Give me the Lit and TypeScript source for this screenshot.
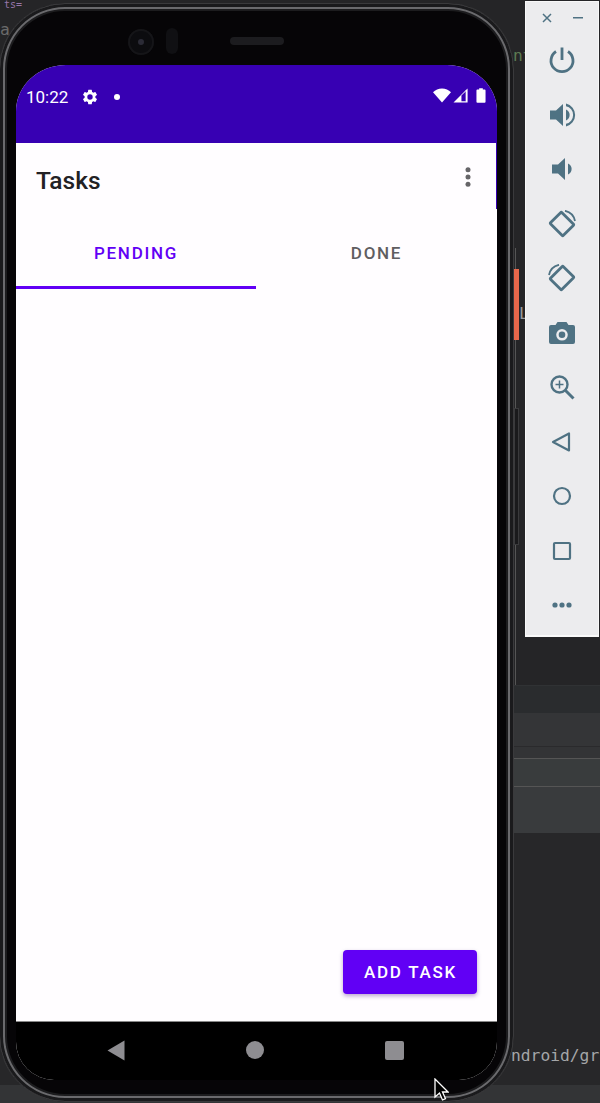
import { LitElement, html, css } from "lit";
import { customElement } from "lit/decorators.js";

@customElement("app-root")
export class AppRoot extends LitElement {
  static styles = css`
    :host { display: block; width: 600px; height: 1103px; position: relative; overflow: hidden; background: #272729; font-family: Roboto, "Liberation Sans", sans-serif; }
    .ide { position: absolute; inset: 0; display: flex; flex-direction: column; }
    .band { flex: none; }
    .b0 { height: 685px; background: #252527; }
    .b1 { height: 28px; background: #2a2c2e; border-top: 1px solid #303234; box-sizing: border-box; }
    .b2 { height: 34px; background: #343537; border-bottom: 1px solid #2a2a2c; box-sizing: border-box; }
    .b3 { height: 11px; background: #333436; }
    .b4 { height: 29px; background: #393c3d; border-top: 1px solid #555; border-bottom: 1px solid #555; box-sizing: border-box; }
    .b5 { height: 46px; background: #393b3d; }
    .b6 { height: 252px; background: #272729; }
    .b7 { flex: 1; background: #333436; }
    .code { position: absolute; font-family: "DejaVu Sans Mono", monospace; font-size: 16.300px; line-height: 20px; white-space: pre; }
    .c1 { left: 511px; top: 1046px; color: #a4a6a8; }
    .c2 { left: 4px; top: 0; line-height: 10px; font-size: 10px; color: #9876aa; }
    .c3 { left: 513px; top: 46px; color: #5c7a52; }
    .c4 { left: 519px; top: 304px; color: #9a9a9a; }
    .c5 { left: 0; top: 20px; color: #6a6a6a; }
    .orange { position: absolute; left: 514px; top: 269px; width: 5px; height: 71px; background: #e8674a; }
    .tick { position: absolute; left: 515px; width: 1px; background: #555; }
    .t1 { top: 248px; height: 22px; }
    .t2 { top: 340px; height: 68px; }
    .t3 { top: 545px; height: 140px; }
    .bracket { position: absolute; left: 514px; top: 408px; width: 5px; height: 137px; box-sizing: border-box; background: #1a1a1c; border: 1px solid #3a3a3c; }
    .device { position: absolute; left: -1px; top: 3px; width: 515px; height: 1099px; box-sizing: border-box; border-radius: 66px; background: #060507; border: 1px solid #3a3a3c; box-shadow: inset 0 0 0 3px #1a1a1c, inset 0 0 0 5px #6a6a6d, inset 0 0 0 7px #1c1c1e; }
    .bezel-top { position: absolute; left: 0; right: 0; top: 0; height: 61px; }
    .camera { position: absolute; left: 128px; top: 25px; width: 26px; height: 26px; border-radius: 50%; background: #0c0c0f; box-shadow: inset 0 0 0 2px #151518; display: flex; align-items: center; justify-content: center; }
    .camera i { width: 6px; height: 6px; border-radius: 50%; background: #2b2b36; }
    .sensor { position: absolute; left: 166px; top: 24px; width: 12px; height: 26px; border-radius: 6px; background: #101013; }
    .speaker { position: absolute; left: 230px; top: 33px; width: 54px; height: 8px; border-radius: 4px; background: #1c1c1f; }
    .screen { position: absolute; left: 16px; top: 61px; width: 481px; height: 1015px; display: flex; flex-direction: column; background: #fffdff; overflow: hidden; border-radius: 50px 50px 38px 38px / 46px 46px 38px 38px; }
    .status { height: 78px; flex: none; background: #3700b3; color: #fff; display: flex; align-items: flex-start; padding: 22px 11px 0 10px; box-sizing: border-box; }
    .time { font-size: 17px; line-height: 20px; }
    .gear { margin-left: 13px; margin-top: 1px; display: block; }
    .dot { width: 6px; height: 6px; border-radius: 50%; background: #fff; margin: 7px 0 0 15px; }
    .sicons { margin-left: auto; display: flex; align-items: center; margin-top: 1px; }
    .sicons svg { display: block; }
    .s-sig { margin: 0 8px 0 2px; }
    .appbar { height: 66px; flex: none; display: flex; align-items: center; justify-content: space-between; padding: 0 26px 0 20px; background: #fffdff; box-shadow: inset -1px 0 0 #3700b3; box-sizing: border-box; }
    .title { font-size: 24.500px; font-weight: 500; color: #222124; line-height: 28px; margin-top: 10px; }
    .more { display: block; margin-top: 2px; }
    .tabs { height: 80px; flex: none; display: flex; }
    .tab { flex: 1 1 0; display: flex; align-items: center; justify-content: center; box-sizing: border-box; padding-top: 11px; font-size: 17px; font-weight: 500; letter-spacing: 1.700px; color: #5f5e61; border-bottom: 3px solid transparent; }
    .tab.on { flex: 0 0 240px; color: #6100f5; border-bottom-color: #6100f5; }
    .content { flex: 1; display: flex; align-items: flex-end; justify-content: flex-end; padding: 0 20.500px 27px 0; }
    .btn { width: 134px; height: 44px; border-radius: 4px; background: #6100f5; color: #fff; font-size: 17px; font-weight: 500; letter-spacing: 1.700px; padding-left: 2px; box-sizing: border-box; display: flex; align-items: center; justify-content: center; box-shadow: 0 2px 4px rgba(60,0,120,.35); }
    .nav { height: 59px; flex: none; background: #000; border-top: 1px solid #888; box-sizing: border-box; display: flex; align-items: center; padding: 0 93px 2px 91px; justify-content: space-between; }
    .nav svg { display: block; }
    .panel { position: absolute; left: 525px; top: 1px; width: 74px; height: 636px; box-sizing: border-box; background: #ececee; border: 1px solid #f8f8f8; border-bottom: 2px solid #fafafa; display: flex; flex-direction: column; align-items: center; }
    .winbtns { height: 31px; width: 100%; flex: none; display: flex; justify-content: space-between; align-items: center; padding: 0 15px; box-sizing: border-box; }
    .winbtns svg { display: block; }
    .tool { height: 54.500px; flex: none; display: flex; align-items: center; justify-content: center; }
    .tool svg { display: block; width: 28px; height: 28px; }
    .cursor { position: absolute; left: 433px; top: 1078px; display: block; }
  `;

  render() {
    const c = "#4f7283";
    return html`
      <div class="ide">
        <div class="band b0"></div><div class="band b1"></div><div class="band b2"></div><div class="band b3"></div>
        <div class="band b4"></div><div class="band b5"></div><div class="band b6"></div><div class="band b7"></div>
      </div>
      <span class="code c2">ts=</span>
      <span class="code c5">a</span>
      <span class="code c3">nt</span>
      <span class="code c4">L</span>
      <span class="code c1">ndroid/gr</span>
      <div class="tick t1"></div>
      <div class="tick t2"></div>
      <div class="tick t3"></div>
      <div class="bracket"></div>
      <div class="orange"></div>

      <div class="device">
        <div class="bezel-top">
          <div class="camera"><i></i></div>
          <div class="sensor"></div>
          <div class="speaker"></div>
        </div>
        <div class="screen">
          <div class="status">
            <span class="time">10:22</span>
            <svg class="gear" width="18" height="18" viewBox="0 0 24 24" fill="#fff"><path d="M19.14 12.94c.04-.3.06-.61.06-.94s-.02-.64-.07-.94l2.03-1.58a.49.49 0 0 0 .12-.61l-1.92-3.32a.49.49 0 0 0-.59-.22l-2.39.96c-.5-.38-1.03-.7-1.62-.94l-.36-2.54a.48.48 0 0 0-.48-.41h-3.84a.47.47 0 0 0-.47.41l-.36 2.54c-.59.24-1.13.57-1.62.94l-2.39-.96a.48.48 0 0 0-.59.22L2.74 8.87a.47.47 0 0 0 .12.61l2.03 1.58c-.05.3-.09.63-.09.94s.02.64.07.94l-2.03 1.58a.49.49 0 0 0-.12.61l1.92 3.32c.12.22.37.29.59.22l2.39-.96c.5.38 1.03.7 1.62.94l.36 2.54c.05.24.24.41.48.41h3.84c.24 0 .44-.17.47-.41l.36-2.54c.59-.24 1.13-.56 1.62-.94l2.39.96c.22.08.47 0 .59-.22l1.92-3.32a.46.46 0 0 0-.12-.61l-2.01-1.58zM12 15.6A3.6 3.6 0 1 1 12 8.4a3.6 3.6 0 0 1 0 7.2z"/></svg>
            <span class="dot"></span>
            <div class="sicons">
              <svg width="18" height="15" viewBox="0 0 18 15" fill="#fff"><path d="M9 14.5 0 4.2C2.3 1.9 5.5.5 9 .5s6.700 1.400 9 3.700z"/></svg>
              <svg class="s-sig" width="15" height="15" viewBox="0 0 16 16"><path d="M.5 15.500 15.500.5v15z" fill="#fff"/><path d="M9 14V8.100L14 3.200V14z" fill="#3700b3"/><path d="M13.500 2.500h1.500v12h-1.500z" fill="#fff"/></svg>
              <svg width="10" height="15" viewBox="0 0 11 16" fill="#fff"><path d="M3.500 0h4v1.500h2a1 1 0 0 1 1 1v12.500a1 1 0 0 1-1 1h-8a1 1 0 0 1-1-1V2.500a1 1 0 0 1 1-1h2z"/></svg>
            </div>
          </div>
          <div class="appbar">
            <span class="title">Tasks</span>
            <svg class="more" width="6" height="20" viewBox="0 0 6 20" fill="#666568"><circle cx="3" cy="2.800" r="2.500"/><circle cx="3" cy="10" r="2.500"/><circle cx="3" cy="17.200" r="2.500"/></svg>
          </div>
          <div class="tabs">
            <div class="tab on">PENDING</div>
            <div class="tab">DONE</div>
          </div>
          <div class="content"><div class="btn">ADD TASK</div></div>
          <div class="nav">
            <svg width="18" height="21" viewBox="0 0 18 21" fill="#8e8d91"><path d="M17.500.5v20L.5 10.500z"/></svg>
            <svg width="18" height="18" viewBox="0 0 18 18" fill="#8e8d91"><circle cx="9" cy="9" r="9"/></svg>
            <svg width="19" height="19" viewBox="0 0 19 19" fill="#8e8d91"><rect width="19" height="19" rx="2"/></svg>
          </div>
        </div>
      </div>

      <div class="panel">
        <div class="winbtns">
          <svg width="12" height="12" viewBox="0 0 12 12" stroke="${c}" stroke-width="1.500" fill="none"><path d="M2 2l8 8M10 2l-8 8"/></svg>
          <svg width="10" height="2" viewBox="0 0 10 2"><rect width="10" height="1.500" fill="${c}"/></svg>
        </div>
        <div class="tool"><svg viewBox="0 0 28 28" fill="none" stroke="${c}" stroke-width="2.800"><path d="M8 5.500a11 11 0 1 0 12 0"/><path d="M14 1.500V14"/></svg></div>
        <div class="tool"><svg viewBox="0 0 28 28" fill="${c}"><path d="M2 9.500h6L15 3v22l-7-6.500H2z"/><path d="M18 8.500a6 6 0 0 1 0 11z"/><path d="M18 2.500a11.800 11.800 0 0 1 0 23v-2.700a9 9 0 0 0 0-17.600z"/></svg></div>
        <div class="tool"><svg viewBox="0 0 28 28" fill="${c}"><path d="M4 9.500h6L17 3v22l-7-6.500H4z"/><path d="M20 8.500a6 6 0 0 1 0 11z"/></svg></div>
        <div class="tool"><svg viewBox="0 0 28 28" fill="none" stroke="${c}" stroke-width="2.800"><rect x="5" y="6" width="18" height="16" rx="1" transform="rotate(45 14 14)"/><path d="M17 .8A13 13 0 0 1 27 11" stroke-width="1.800"/></svg></div>
        <div class="tool"><svg viewBox="0 0 28 28" fill="none" stroke="${c}" stroke-width="2.800"><rect x="5" y="6" width="18" height="16" rx="1" transform="rotate(-45 14 14)"/><path d="M11 .8A13 13 0 0 0 1 11" stroke-width="1.800"/></svg></div>
        <div class="tool"><svg viewBox="0 0 28 28" fill="${c}"><path fill-rule="evenodd" d="M9.500 3h9l2 3H25a2 2 0 0 1 2 2v15a2 2 0 0 1-2 2H3a2 2 0 0 1-2-2V8a2 2 0 0 1 2-2h4.500zM14 10a5.800 5.800 0 1 0 0 11.600A5.800 5.800 0 0 0 14 10zm0 2.500a3.300 3.300 0 1 1 0 6.600 3.300 3.300 0 0 1 0-6.600z"/></svg></div>
        <div class="tool"><svg viewBox="0 0 28 28" fill="none" stroke="${c}" stroke-width="2.400"><circle cx="11.500" cy="11.500" r="8"/><path d="M17.500 17.500l8 8" stroke-width="3"/><path d="M7.500 11.500h8M11.500 7.500v8" stroke-width="1.500"/></svg></div>
        <div class="tool"><svg viewBox="0 0 28 28" fill="none" stroke="${c}" stroke-width="2.200" stroke-linejoin="round"><path d="M21 5.500v17L5 14z"/></svg></div>
        <div class="tool"><svg viewBox="0 0 28 28" fill="none" stroke="${c}" stroke-width="2.200"><circle cx="14" cy="14" r="8"/></svg></div>
        <div class="tool"><svg viewBox="0 0 28 28" fill="none" stroke="${c}" stroke-width="2.200"><rect x="6" y="6" width="16" height="16" rx="1"/></svg></div>
        <div class="tool"><svg viewBox="0 0 28 28" fill="${c}"><circle cx="7" cy="14" r="2.600"/><circle cx="14" cy="14" r="2.600"/><circle cx="21" cy="14" r="2.600"/></svg></div>
      </div>

      <svg class="cursor" width="16" height="24" viewBox="0 0 16 24"><path d="M2 1v18l4.500-4 3 7 3-1.300-3-6.700H15z" fill="#000" stroke="#fff" stroke-width="1.300"/></svg>
    `;
  }
}
